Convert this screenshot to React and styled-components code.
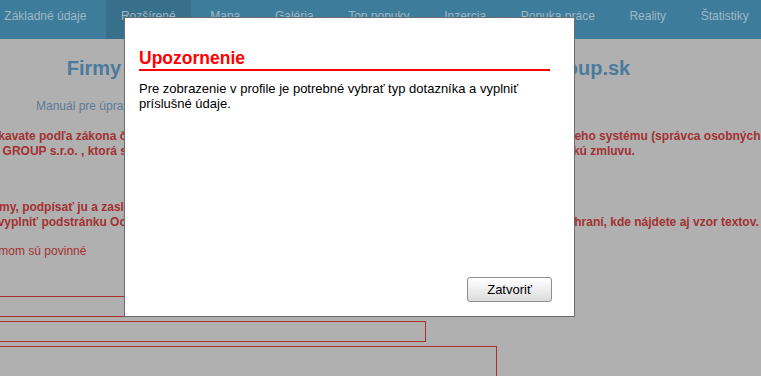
import React from 'react';
import styled, { createGlobalStyle } from 'styled-components';

const GlobalStyle = createGlobalStyle`
  html, body {
    margin: 0;
    padding: 0;
    overflow: hidden;
    background: #b0b0b0;
    font-family: "Liberation Sans", Arial, sans-serif;
  }
`;

const NAV_ITEMS = [
  'Základné údaje',
  'Rozšírené',
  'Mapa',
  'Galéria',
  'Top ponuky',
  'Inzercia',
  'Ponuka práce',
  'Reality',
  'Štatistiky',
];

const Nav = styled.nav`
  height: 39px;
  background: #3e7c9b;
  display: flex;
  gap: 4px;
  margin-left: -11px;
  white-space: nowrap;
`;

const NavItem = styled.a`
  display: block;
  padding: 9px 15.3px 0;
  font-size: 12px;
  line-height: 14px;
  color: #9fb8c6;
  background: ${(p) => (p.$active ? '#386f8a' : 'transparent')};
  text-decoration: none;
`;

// obsah stránky je širší ako okno a posunutý doľava
const Content = styled.main`
  margin-left: -67px;
  width: 831px;
`;

const Title = styled.h1`
  margin: 17px 0 0;
  font-size: 20px;
  line-height: 24px;
  font-weight: bold;
  text-align: center;
  word-spacing: 0.9px;
  color: #4a7b9c;
  white-space: nowrap;
`;

const Manual = styled.p`
  margin: 19px 0 0 103px;
  font-size: 12px;
  line-height: 15px;
  color: #5c7b98;
`;

const Notice = styled.p`
  margin: ${(p) => p.$top}px 0 0;
  font-size: 12px;
  line-height: 15px;
  font-weight: ${(p) => (p.$bold ? 'bold' : 'normal')};
  color: #a33131;
  white-space: nowrap;
`;

const Form = styled.form`
  margin-top: 37px;
  display: flex;
  flex-direction: column;
  gap: 4px;
`;

const Field = styled.div`
  box-sizing: border-box;
  width: ${(p) => p.$width}px;
  height: ${(p) => p.$height}px;
  border: 1px solid #a83030;
`;

const Overlay = styled.div`
  position: fixed;
  inset: 0;
`;

const Dialog = styled.div`
  position: absolute;
  left: 124px;
  top: 17px;
  box-sizing: border-box;
  width: 451px;
  height: 300px;
  background: #fff;
  border: 1px solid #6b6b6b;
  display: flex;
  flex-direction: column;
  padding: 30px 24px 14px 14px;
`;

const DialogTitle = styled.h2`
  margin: 0;
  font-size: 17.5px;
  line-height: 21px;
  font-weight: bold;
  color: #f00;
  border-bottom: 2px solid #f00;
`;

const DialogText = styled.p`
  margin: 10px 0 0;
  font-size: 13px;
  line-height: 15px;
  color: #000;
`;

const DialogFooter = styled.div`
  margin-top: auto;
  display: flex;
  justify-content: flex-end;
  margin-right: -2px;
`;

const CloseButton = styled.button`
  width: 85px;
  height: 25px;
  padding: 0;
  font-family: "Liberation Sans", Arial, sans-serif;
  font-size: 13px;
  color: #000;
  background: linear-gradient(#ffffff, #dcdcdc);
  border: 1px solid #8e8e8e;
  border-radius: 3px;
`;

export default function App() {
  return (
    <>
      <GlobalStyle />
      <Nav>
        {NAV_ITEMS.map((item) => (
          <NavItem key={item} href="#" $active={item === 'Rozšírené'}>
            {item}
          </NavItem>
        ))}
      </Nav>
      <Content>
        <Title>Firmy – úprava profilu firmy na portáli www.firmy-group.sk</Title>
        <Manual>Manuál pre úpravu profilu nájdete tu.</Manual>
        <Notice $bold $top={15}>
          Údaje ponúkavate podľa zákona č. 18/2018 Z.z. o ochrane osobných údajov nášmu prevádzkovateľovi informačneho systému (správca osobných údajov)
          <br />
          firmou ABC GROUP s.r.o. , ktorá s Vami podpisuje zmluvu o spracúvaní osobných údajov, tzv sprostredkovateľskú zmluvu.
        </Notice>
        <Notice $bold $top={41}>
          zmluvu z firmy, podpísať ju a zaslať nám ju poštou.
          <br />
          Ďalej treba vyplniť podstránku Ochrana osobných údajov v časti Rozšírené, a uvediete tu i o ich spracovaní a ochraní, kde nájdete aj vzor textov.
        </Notice>
        <Notice $top={14}>Položky s rámom sú povinné</Notice>
        <Form>
          <Field $width={520} $height={21} />
          <Field $width={493} $height={21} />
          <Field $width={564} $height={80} />
        </Form>
      </Content>
      <Overlay>
        <Dialog role="dialog">
          <DialogTitle>Upozornenie</DialogTitle>
          <DialogText>
            Pre zobrazenie v profile je potrebné vybrať typ dotazníka a vyplniť príslušné údaje.
          </DialogText>
          <DialogFooter>
            <CloseButton type="button">Zatvoriť</CloseButton>
          </DialogFooter>
        </Dialog>
      </Overlay>
    </>
  );
}
